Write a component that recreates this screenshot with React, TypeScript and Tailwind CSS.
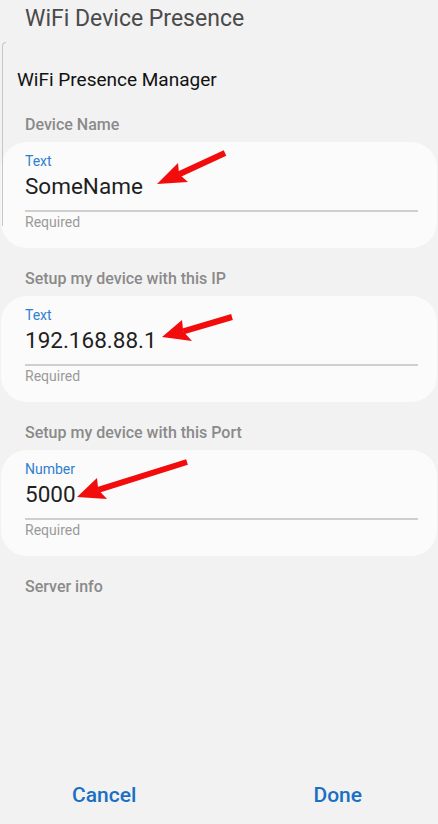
import React from "react";

type Field = {
  section: string;
  kind: string;
  value: string;
};

const fields: Field[] = [
  { section: "Device Name", kind: "Text", value: "SomeName" },
  { section: "Setup my device with this IP", kind: "Text", value: "192.168.88.1" },
  { section: "Setup my device with this Port", kind: "Number", value: "5000" },
];

// red annotation arrows: tail, tip, two back corners
const arrows = [
  { tail: [225, 153], tip: [157, 184], a: [178, 163], b: [188, 182] },
  { tail: [232, 317], tip: [162, 337], a: [182, 320], b: [192, 341] },
  { tail: [187, 462], tip: [77, 497], a: [97, 478], b: [107, 499] },
];

const Arrows: React.FC = () => (
  <svg className="pointer-events-none absolute left-0 top-0" width={438} height={824}>
    {arrows.map((ar, i) => {
      const mx = (ar.a[0] + ar.b[0]) / 2;
      const my = (ar.a[1] + ar.b[1]) / 2;
      // notch a little toward the tip
      const nx = mx + (ar.tip[0] - mx) * 0.15;
      const ny = my + (ar.tip[1] - my) * 0.15;
      return (
        <g key={i} fill="#f20c0c" stroke="none">
          <line x1={ar.tail[0]} y1={ar.tail[1]} x2={nx} y2={ny} stroke="#f20c0c" strokeWidth={6} />
          <polygon points={`${ar.tip[0]},${ar.tip[1]} ${ar.a[0]},${ar.a[1]} ${nx},${ny} ${ar.b[0]},${ar.b[1]}`} />
        </g>
      );
    })}
  </svg>
);

const FieldCard: React.FC<{ field: Field }> = ({ field }) => (
  <div>
    <div className="pl-[25px] text-[16px] font-medium leading-[20px] text-[#8a8a8a]">{field.section}</div>
    <div className="mt-[7px] ml-[1px] mr-[1px] rounded-[26px] bg-[#fbfbfb] pb-[18px] pl-[24px] pr-[19px] pt-[11px]">
      <div className="text-[14px] leading-[16px] text-[#2f80cf]">{field.kind}</div>
      <div className="mt-[4px] text-[22.5px] leading-[26px] text-[#1f1f1f]">{field.value}</div>
      <div className="mt-[11px] h-[2px] bg-[#cfcfcf]" />
      <div className="mt-[2px] text-[14px] leading-[16px] text-[#9a9a9a]">Required</div>
    </div>
  </div>
);

const App: React.FC = () => {
  return (
    <div
      className="relative flex h-[824px] w-[438px] flex-col overflow-hidden bg-[#f2f2f2]"
      style={{ fontFamily: "Roboto, 'Noto Sans', sans-serif" }}
    >
      {/* edge of the sheet behind */}
      <div className="absolute left-[2px] top-[42px] h-[184px] w-[4px] rounded-tl-[5px] border-l border-t border-[#c6c6c6]" />

      <h1 className="pl-[25px] pt-[5px] text-[23px] font-normal leading-[28px] text-[#4a4a4a]">
        WiFi Device Presence
      </h1>
      <h2 className="mt-[35px] pl-[17px] text-[19px] leading-[24px] text-[#111111]">WiFi Presence Manager</h2>

      <div className="mt-[23px] flex flex-col gap-[21px]">
        {fields.map((f) => (
          <FieldCard key={f.section} field={f} />
        ))}
        <div className="pl-[25px] text-[16px] font-medium leading-[20px] text-[#8a8a8a]">Server info</div>
      </div>

      {/* Buttons */}
      <div className="mt-auto flex pb-[15px]">
        <button type="button" className="ml-[72px] text-[21px] font-medium leading-[28px] text-[#1b6fc3]">
          Cancel
        </button>
        <button type="button" className="ml-auto mr-[76px] text-[21px] font-medium leading-[28px] text-[#1b6fc3]">
          Done
        </button>
      </div>

      <Arrows />
    </div>
  );
};

export default App;
